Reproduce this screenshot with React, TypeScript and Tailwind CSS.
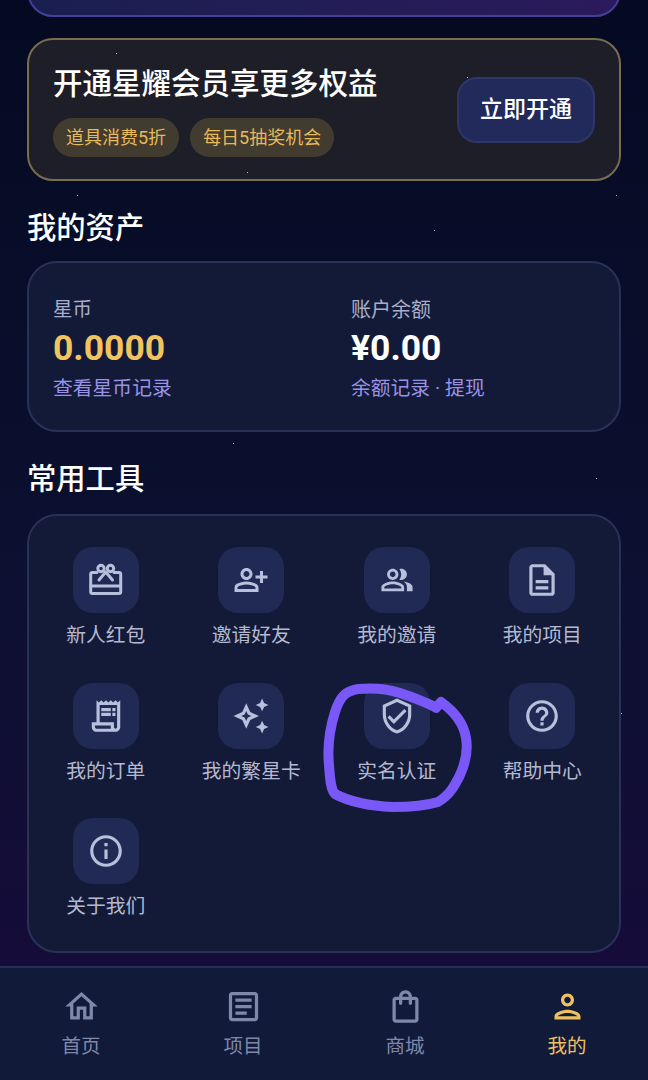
import type { ReactNode } from "react";
import {
  MdOutlinePersonAddAlt,
  MdOutlinePeopleAlt,
  MdOutlineDescription,
  MdOutlineReceiptLong,
  MdOutlineAutoAwesome,
  MdOutlineVerifiedUser,
  MdOutlineHelpOutline,
  MdOutlineInfo,
  MdOutlineHome,
  MdOutlineArticle,
  MdOutlineShoppingBag,
  MdOutlinePerson,
} from "react-icons/md";

function GiftIcon() {
  return (
    <svg width="36" height="36" viewBox="0 0 36 36" fill="none" stroke="currentColor" strokeWidth="3" strokeLinecap="round" strokeLinejoin="round">
      <path d="M9 10.500H4.500a1.800 1.800 0 0 0-1.800 1.800v17.400a1.800 1.800 0 0 0 1.800 1.800h26.400a1.800 1.800 0 0 0 1.800-1.800V12.300a1.800 1.800 0 0 0-1.800-1.800H26" />
      <path d="M3 24h29.500" />
      <circle cx="13" cy="6.500" r="3.200" />
      <circle cx="22.500" cy="6.500" r="3.200" />
      <path d="M17.700 10 11 18M17.700 10 24.500 18" />
    </svg>
  );
}

const tools: { label: string; icon: ReactNode }[] = [
  { label: "新人红包", icon: <GiftIcon /> },
  { label: "邀请好友", icon: <MdOutlinePersonAddAlt size={36} /> },
  { label: "我的邀请", icon: <MdOutlinePeopleAlt size={34} /> },
  { label: "我的项目", icon: <MdOutlineDescription size={38} /> },
  { label: "我的订单", icon: <MdOutlineReceiptLong size={38} /> },
  { label: "我的繁星卡", icon: <MdOutlineAutoAwesome size={38} /> },
  { label: "实名认证", icon: <MdOutlineVerifiedUser size={38} /> },
  { label: "帮助中心", icon: <MdOutlineHelpOutline size={38} /> },
  { label: "关于我们", icon: <MdOutlineInfo size={38} /> },
];

const nav: { label: string; icon: ReactNode; active?: boolean }[] = [
  { label: "首页", icon: <MdOutlineHome size={39} /> },
  { label: "项目", icon: <MdOutlineArticle size={39} /> },
  { label: "商城", icon: <MdOutlineShoppingBag size={39} /> },
  { label: "我的", icon: <MdOutlinePerson size={39} />, active: true },
];

const stars = [
  "left-[116px] top-[53px]",
  "left-[247px] top-[172px]",
  "left-[77px] top-[195px]",
  "left-[616px] top-[195px]",
  "left-[434px] top-[230px]",
  "left-[467px] top-[77px]",
  "left-[233px] top-[443px]",
  "left-[596px] top-[478px]",
  "left-[621px] top-[713px]",
];

export default function App() {
  return (
    <div className="relative flex h-[1080px] w-[648px] flex-col overflow-hidden bg-gradient-to-b from-[#050a22] via-[#0b1030] to-[#180a3c] font-['Roboto','Noto_Sans_CJK_SC',sans-serif] text-white">
      <main className="flex min-h-0 flex-1 flex-col overflow-hidden px-[27px]">
        <div className="-mt-[44px] h-[61px] shrink-0 rounded-[26px] border-2 border-[#453f97] bg-gradient-to-r from-[#191f50] to-[#2b1a5c]" />

        <section className="mt-[21px] flex h-[143px] shrink-0 items-center justify-between rounded-[26px] border-2 border-[#7a6c50] bg-[#1e1e28] px-[24px]">
          <div className="mt-[2px]">
            <h2 className="text-[29.500px] font-medium leading-[40px]">开通星耀会员享更多权益</h2>
            <div className="mt-[14px] flex gap-[11px]">
              <span className="flex h-[39px] items-center rounded-full bg-[#423b30] px-[13px] text-[18px] text-[#e6b959]">道具消费5折</span>
              <span className="flex h-[39px] items-center rounded-full bg-[#423b30] px-[13px] text-[18px] text-[#e6b959]">每日5抽奖机会</span>
            </div>
          </div>
          <button className="flex h-[66px] w-[138px] items-center justify-center rounded-[20px] border-2 border-[#2d3769] bg-[#212a5a] pt-[2px] text-[23px] font-medium text-white">立即开通</button>
        </section>

        <h2 className="mt-[27px] text-[29.300px] font-medium leading-[40px]">我的资产</h2>

        <section className="mt-[13px] grid h-[171px] shrink-0 grid-cols-2 rounded-[30px] border-2 border-[#2a3157] bg-[#131a38] pl-[24px] pt-[32px]">
          <div>
            <div className="text-[19.500px] leading-[30px] text-[#a9aec8]">星币</div>
            <div className="text-[35.500px] font-bold leading-[46px] text-[#f2c45f]">0.0000</div>
            <div className="mt-[3px] text-[19.800px] leading-[30px] text-[#9a92e6]">查看星币记录</div>
          </div>
          <div className="pl-[15px]">
            <div className="text-[20px] leading-[30px] text-[#a9aec8]">账户余额</div>
            <div className="text-[35.500px] font-bold leading-[46px] text-white">¥0.00</div>
            <div className="mt-[3px] text-[19.800px] leading-[30px] text-[#9a92e6]">余额记录 · 提现</div>
          </div>
        </section>

        <h2 className="mt-[27px] text-[29.300px] font-medium leading-[40px]">常用工具</h2>

        <section className="mt-[15px] grid h-[439px] shrink-0 grid-cols-4 content-start gap-y-[31.500px] rounded-[30px] border-2 border-[#2a3157] bg-[#131a38] px-[4px] pt-[31px]">
          {tools.map((t) => (
            <div key={t.label} className="flex flex-col items-center">
              <div className="flex h-[66px] w-[66px] items-center justify-center rounded-[20px] bg-[#212a55] text-[#b9c0dc]">{t.icon}</div>
              <div className="mt-[8px] whitespace-nowrap text-[19.800px] leading-[30px] text-[#b4b9d0]">{t.label}</div>
            </div>
          ))}
        </section>
      </main>

      <nav className="grid h-[114px] shrink-0 grid-cols-4 border-t-2 border-[#262e58] bg-[#121a3a] pt-[19px]">
        {nav.map((n) => (
          <div key={n.label} className={`flex flex-col items-center ${n.active ? "text-[#eec05f]" : "text-[#7f88a9]"}`}>
            {n.icon}
            <div className="mt-[6px] text-[19.500px] leading-[30px]">{n.label}</div>
          </div>
        ))}
      </nav>

      {stars.map((s) => (
        <span key={s} className={`absolute h-[1px] w-[1px] bg-white/70 ${s}`} />
      ))}

      <svg className="pointer-events-none absolute left-0 top-0" width="648" height="1080" fill="none">
        <path
          d="M435 707 C 425 702 412 697 400 693 C 385 688 370 688 358 689 C 345 691 340 697 335 712 C 330 728 327 745 329 765 C 330 780 331 790 335 794 C 350 802 370 806 393 807 C 410 807 428 805 438 802 C 450 795 455 785 460 775 C 466 762 468 750 466 738 C 464 725 455 712 441 702 L 436 708"
          stroke="#7a58f8"
          strokeWidth="10"
          strokeLinecap="round"
          strokeLinejoin="round"
        />
      </svg>
    </div>
  );
}
